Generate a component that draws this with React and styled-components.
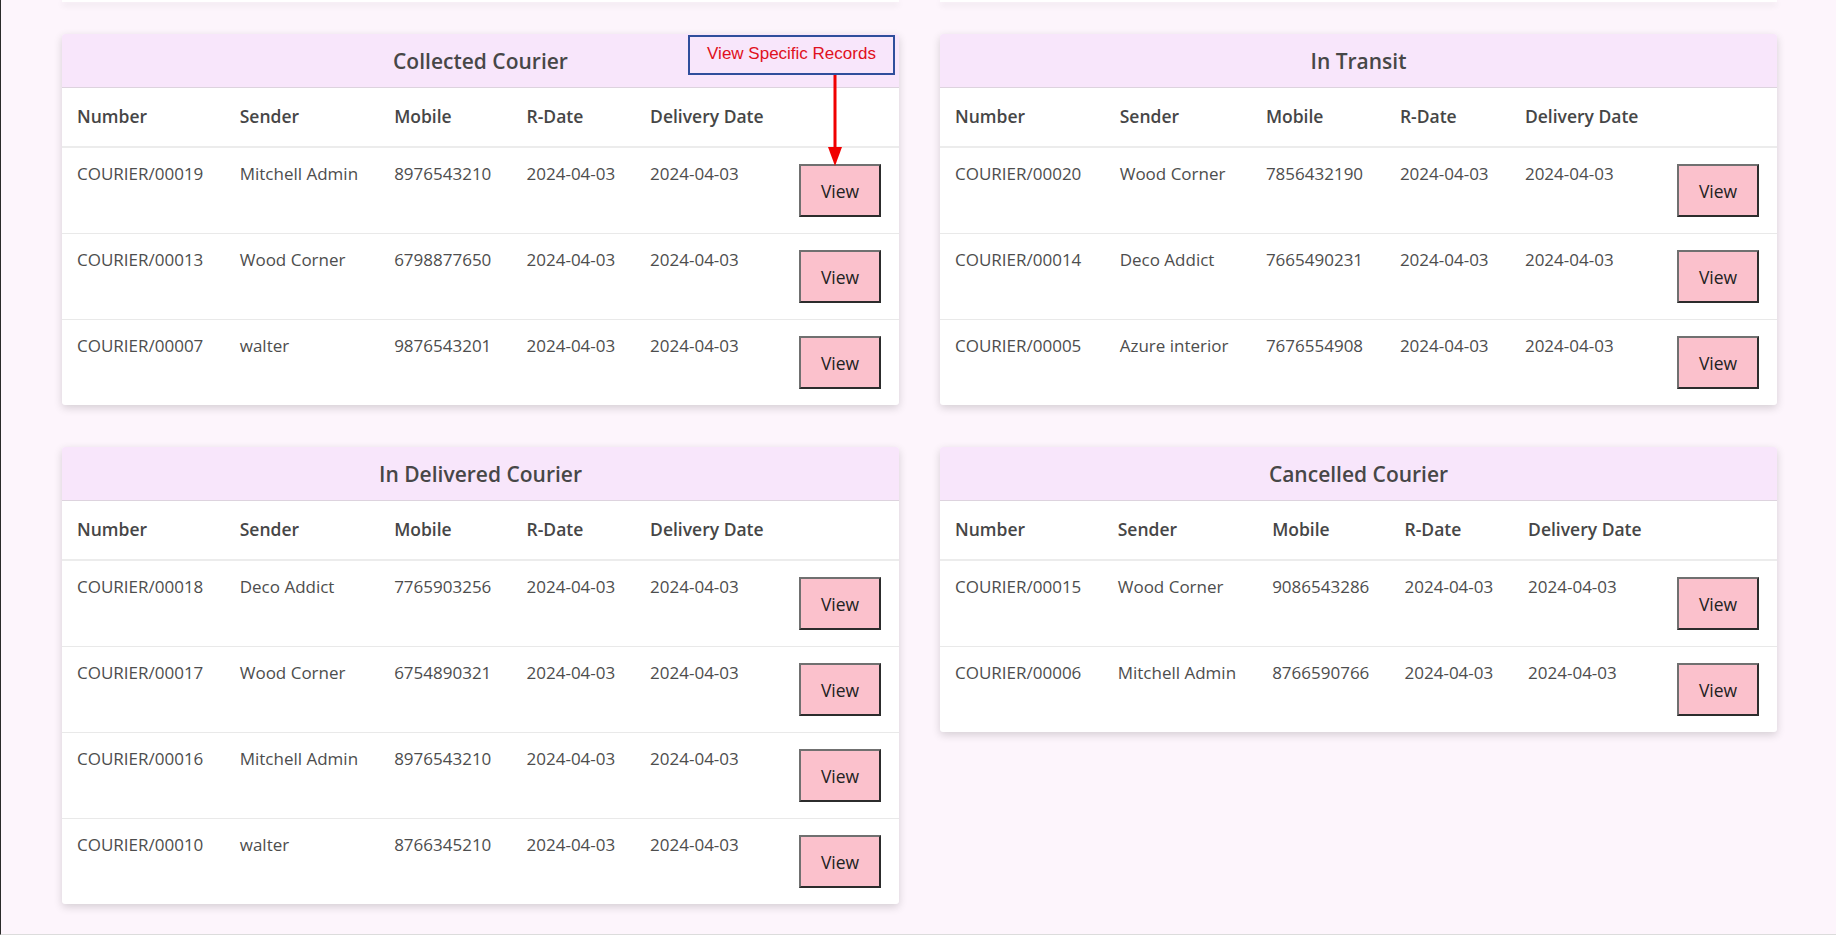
import React from "react";
import styled, { createGlobalStyle } from "styled-components";

const GlobalStyle = createGlobalStyle`
  html, body {
    margin: 0;
    padding: 0;
    background: #fdf5fc;
  }
  body {
    font-family: "Open Sans", "Noto Sans", sans-serif;
  }
`;

const columns = ["Number", "Sender", "Mobile", "R-Date", "Delivery Date"];

const sections = [
  {
    title: "Collected Courier",
    annotated: true,
    rows: [
      ["COURIER/00019", "Mitchell Admin", "8976543210"],
      ["COURIER/00013", "Wood Corner", "6798877650"],
      ["COURIER/00007", "walter", "9876543201"],
    ],
  },
  {
    title: "In Transit",
    rows: [
      ["COURIER/00020", "Wood Corner", "7856432190"],
      ["COURIER/00014", "Deco Addict", "7665490231"],
      ["COURIER/00005", "Azure interior", "7676554908"],
    ],
  },
  {
    title: "In Delivered Courier",
    rows: [
      ["COURIER/00018", "Deco Addict", "7765903256"],
      ["COURIER/00017", "Wood Corner", "6754890321"],
      ["COURIER/00016", "Mitchell Admin", "8976543210"],
      ["COURIER/00010", "walter", "8766345210"],
    ],
  },
  {
    title: "Cancelled Courier",
    rows: [
      ["COURIER/00015", "Wood Corner", "9086543286"],
      ["COURIER/00006", "Mitchell Admin", "8766590766"],
    ],
  },
];

export default function App() {
  return (
    <>
      <GlobalStyle />
      <Page>
        <StubRow>
          <Stub />
          <Stub />
        </StubRow>
        <Grid>
          {sections.map((s) => (
            <Card key={s.title}>
              <CardHeader>{s.title}</CardHeader>
              <Table>
                <thead>
                  <tr>
                    {columns.map((c) => (
                      <Th key={c}>{c}</Th>
                    ))}
                    <Th />
                  </tr>
                </thead>
                <tbody>
                  {s.rows.map((r) => (
                    <tr key={r[0]}>
                      <Td>{r[0]}</Td>
                      <Td>{r[1]}</Td>
                      <Td>{r[2]}</Td>
                      <Td>2024-04-03</Td>
                      <Td>2024-04-03</Td>
                      <ActionCell>
                        <ViewButton>View</ViewButton>
                      </ActionCell>
                    </tr>
                  ))}
                </tbody>
              </Table>
              {s.annotated && (
                <>
                  <Callout>View Specific Records</Callout>
                  <Arrow width="16" height="92" viewBox="0 0 16 92">
                    <rect x="6.5" y="0" width="3" height="74" fill="#f00000" />
                    <polygon points="1,72 15,72 8,91" fill="#f00000" />
                  </Arrow>
                </>
              )}
            </Card>
          ))}
        </Grid>
      </Page>
    </>
  );
}

const Page = styled.div`
  box-sizing: border-box;
  height: 935px;
  overflow: hidden;
  border-left: 1px solid #2a2a2a;
  border-bottom: 1px solid #dcdcdc;
  padding-left: 61px;
`;

const StubRow = styled.div`
  display: grid;
  grid-template-columns: 837px 837px;
  column-gap: 41px;
  margin-bottom: 32px;
`;

const Stub = styled.div`
  height: 2px;
  background: #ffffff;
  box-shadow: 0 3px 6px rgba(0, 0, 0, 0.12);
`;

const Grid = styled.div`
  display: grid;
  grid-template-columns: 837px 837px;
  column-gap: 41px;
  row-gap: 42px;
  align-items: start;
`;

const Card = styled.div`
  position: relative;
  background: #ffffff;
  border-radius: 3px;
  box-shadow: 0 3px 8px rgba(0, 0, 0, 0.16);
`;

const CardHeader = styled.div`
  height: 53px;
  display: flex;
  align-items: center;
  justify-content: center;
  background: #f8e6fb;
  border-bottom: 1px solid #ddd3de;
  border-radius: 3px 3px 0 0;
  color: #474747;
  font-size: 21px;
  font-weight: 600;
`;

const Table = styled.table`
  width: 100%;
  border-collapse: collapse;
  color: #4d4d4d;
  font-size: 17px;
`;

const Th = styled.th`
  height: 56px;
  padding: 0 15px 2px 15px;
  text-align: left;
  font-weight: 600;
  font-size: 17.5px;
  color: #464646;
  white-space: nowrap;
  border-bottom: 2px solid #ececec;
`;

const Td = styled.td`
  height: 85px;
  box-sizing: border-box;
  padding: 14px 15px 0 15px;
  vertical-align: top;
  white-space: nowrap;
  border-top: 1px solid #e9e9e9;
`;

const ActionCell = styled.td`
  height: 85px;
  padding: 0 18px 0 10px;
  text-align: right;
  vertical-align: middle;
  border-top: 1px solid #e9e9e9;
`;

const ViewButton = styled.button`
  width: 82px;
  height: 53px;
  background: #fbc1cc;
  border: 2px solid;
  border-color: #707070 #2c2c2c #2c2c2c #707070;
  color: #222222;
  font-family: "Open Sans", "Noto Sans", sans-serif;
  font-size: 17.5px;
  cursor: pointer;
`;

const Callout = styled.div`
  position: absolute;
  top: 1px;
  left: 626px;
  box-sizing: border-box;
  width: 207px;
  height: 40px;
  padding-top: 7px;
  text-align: center;
  background: #f8e6fb;
  border: 2px solid #2f4e9c;
  color: #e01020;
  font-family: "Liberation Sans", Arial, sans-serif;
  font-size: 17px;
`;

const Arrow = styled.svg`
  position: absolute;
  top: 41px;
  left: 765px;
`;
